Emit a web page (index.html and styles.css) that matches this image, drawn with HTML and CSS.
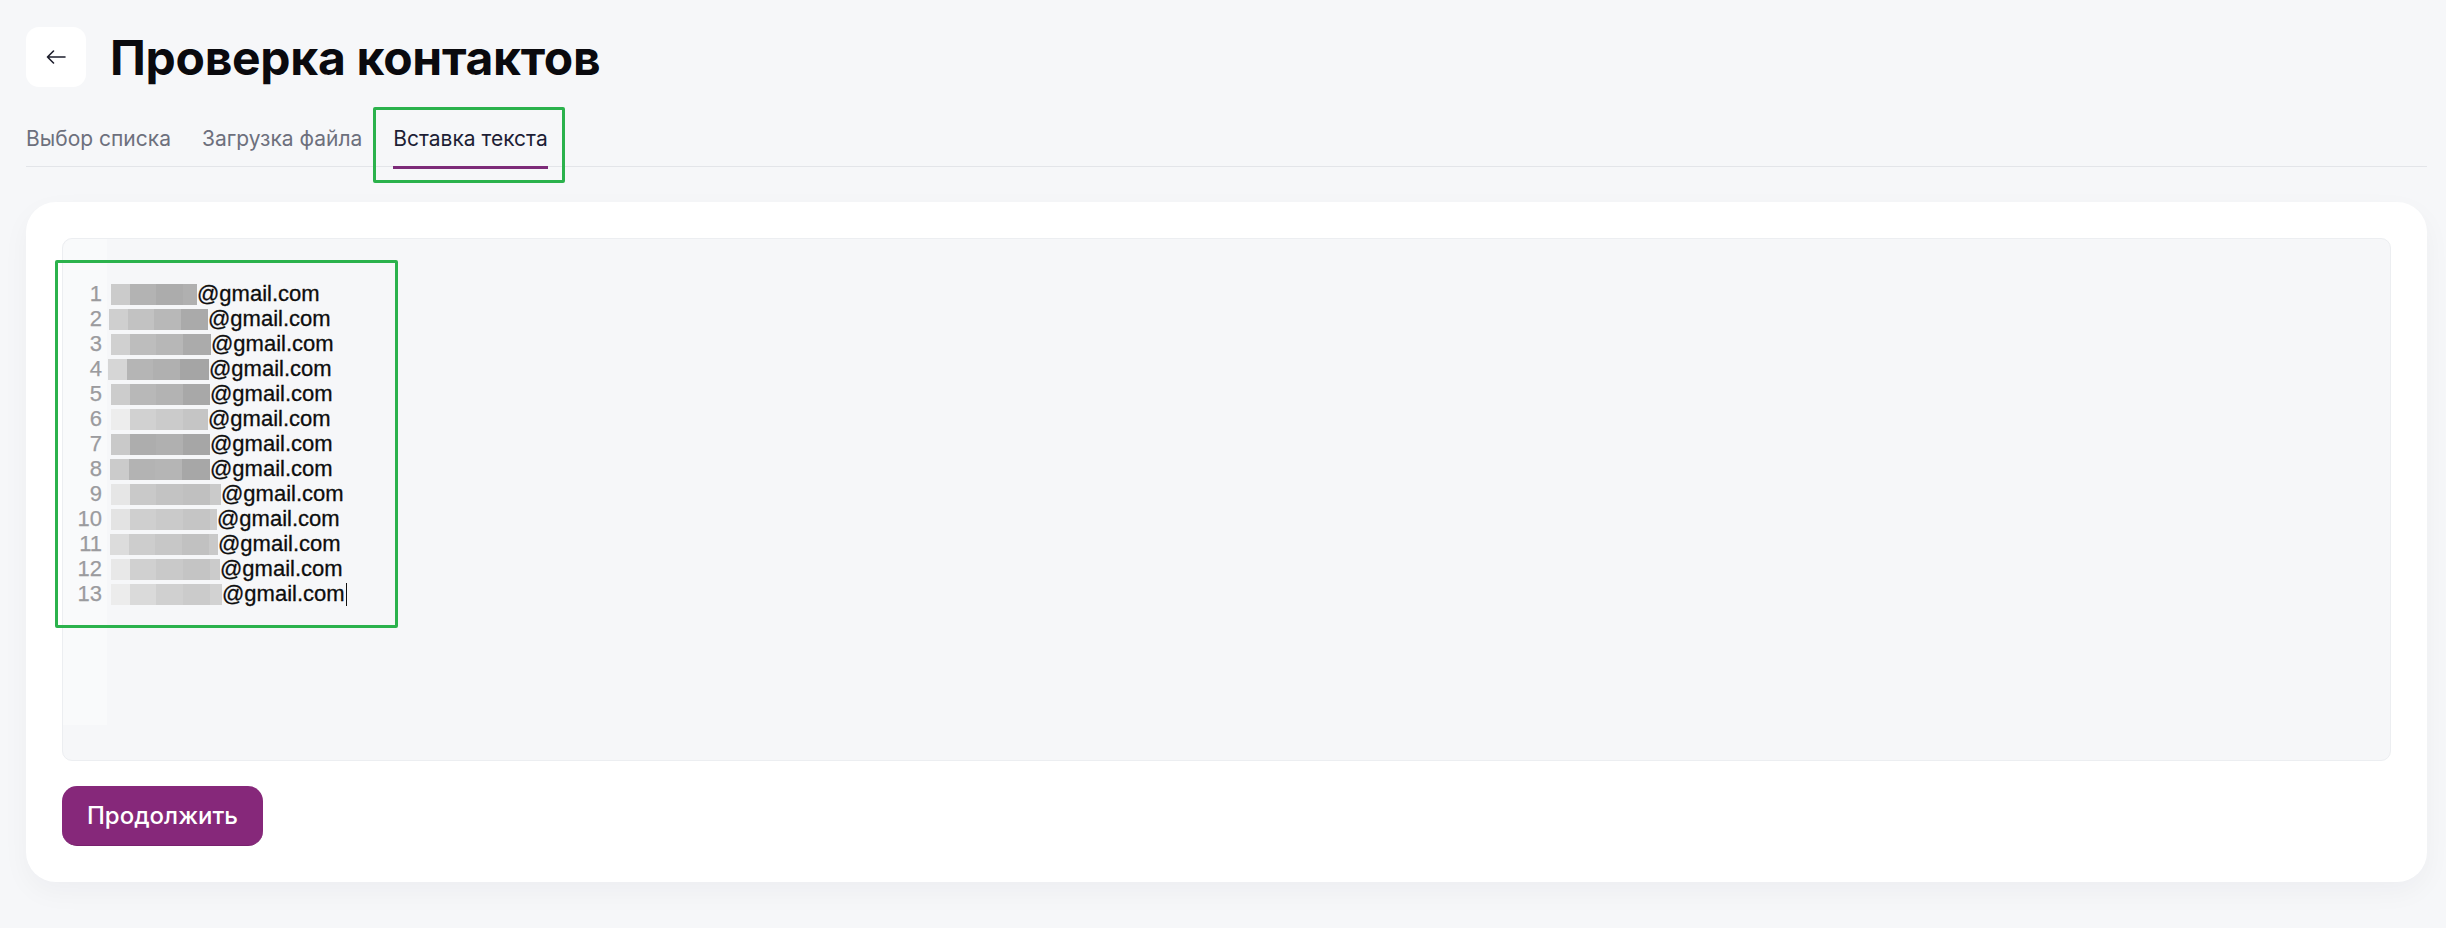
FILE: index.html
```html
<!DOCTYPE html>
<html lang="ru">
<head>
    <meta charset="UTF-8">
    <meta name="viewport" content="width=device-width, initial-scale=1.0">
    <title>Проверка контактов</title>
    <link rel="stylesheet" href="styles.css">
</head>
<body>
    <header class="page-head">
        <button class="back-btn" type="button" aria-label="Назад">
            <svg width="20" height="14" viewBox="0 0 20 14" fill="none">
                <path d="M19 7H1.5M7.5 1L1.5 7l6 6" stroke="#1d1e2c" stroke-width="1.6" stroke-linecap="round" stroke-linejoin="round"/>
            </svg>
        </button>
        <h1>Проверка контактов</h1>
    </header>

    <nav class="tabs">
        <a class="tab" href="#">Выбор списка</a>
        <a class="tab" href="#">Загрузка файла</a>
        <a class="tab active" href="#">Вставка текста<span class="mark mark-tab"></span></a>
    </nav>

    <main class="card">
        <div class="editor">
            <div class="gutter">
                <div>1</div><div>2</div><div>3</div><div>4</div><div>5</div>
                <div>6</div><div>7</div><div>8</div><div>9</div><div>10</div>
                <div>11</div><div>12</div><div>13</div>
            </div>
            <div class="lines">
                <div><span class="mask m1"></span>@gmail.com</div>
                <div><span class="mask m2"></span>@gmail.com</div>
                <div><span class="mask m3"></span>@gmail.com</div>
                <div><span class="mask m4"></span>@gmail.com</div>
                <div><span class="mask m5"></span>@gmail.com</div>
                <div><span class="mask m6"></span>@gmail.com</div>
                <div><span class="mask m7"></span>@gmail.com</div>
                <div><span class="mask m8"></span>@gmail.com</div>
                <div><span class="mask m9"></span>@gmail.com</div>
                <div><span class="mask m10"></span>@gmail.com</div>
                <div><span class="mask m11"></span>@gmail.com</div>
                <div><span class="mask m12"></span>@gmail.com</div>
                <div><span class="mask m13"></span>@gmail.com<span class="caret"></span></div>
            </div>
            <span class="mark mark-editor"></span>
        </div>

        <button class="primary-btn" type="button">Продолжить</button>
    </main>
</body>
</html>
```

FILE: styles.css
```css
body {
    font-family: 'Inter', 'Noto Sans', sans-serif;
    margin: 0;
    padding: 27px 19px 40px 26px;
    background: #f6f7f9;
    color: #111;
}

.page-head {
    display: flex;
    align-items: center;
    gap: 24px;
    height: 60px;
}

.back-btn {
    width: 60px;
    height: 60px;
    border: none;
    border-radius: 13px;
    background: #fff;
    display: flex;
    align-items: center;
    justify-content: center;
    padding: 0;
    cursor: pointer;
}

.page-head h1 {
    margin: 0;
    font-size: 48px;
    font-weight: 700;
    letter-spacing: -0.3px;
    color: #0a0a0e;
}

.tabs {
    display: flex;
    gap: 31px;
    margin-top: 38px;
    border-bottom: 1px solid #e3e5e9;
}

.tab {
    position: relative;
    font-size: 21px;
    line-height: 28px;
    padding-bottom: 13px;
    color: #6d707d;
    text-decoration: none;
}

.tab.active {
    color: #1d1e35;
}

.tab.active::after {
    content: '';
    position: absolute;
    left: 0;
    right: 0;
    bottom: -3px;
    height: 3px;
    background: #7d2b79;
}

/* green annotation frames */
.mark {
    position: absolute;
    border: 3px solid #2bb24c;
    border-radius: 2px;
    box-sizing: border-box;
    pointer-events: none;
}

.mark-tab {
    left: -20px;
    top: -18px;
    right: -17px;
    height: 76px;
}

.mark-editor {
    left: -8px;
    top: 21px;
    width: 343px;
    height: 368px;
}

.card {
    margin-top: 35px;
    background: #fff;
    border-radius: 30px;
    padding: 36px;
    box-shadow: 0 10px 28px rgba(20, 24, 40, 0.04);
}

.editor {
    position: relative;
    display: flex;
    align-items: flex-start;
    height: 523px;
    box-sizing: border-box;
    border: 1px solid #eceef1;
    border-radius: 10px;
    background: #f6f7f9;
    font-family: 'Liberation Sans', Arial, sans-serif;
    font-size: 22px;
    line-height: 25px;
}

.gutter {
    width: 39px;
    height: 444px;
    padding: 42px 5px 0 0;
    text-align: right;
    color: #9b9b9e;
    background: #f9fafb;
    border-radius: 10px 0 0 0;
    -webkit-text-stroke: 0.25px #9b9b9e;
}

.lines {
    padding: 42px 0 0 4px;
    color: #0d0d0d;
    -webkit-text-stroke: 0.3px #0d0d0d;
}

.mask {
    display: inline-block;
    height: 21px;
    vertical-align: -4px;
    background: linear-gradient(90deg,
        var(--c1) 0 19px,
        var(--c2) 19px 45px,
        var(--c3) 45px 72px,
        var(--c4) 72px 99px,
        var(--c5, var(--c4)) 99px);
}

.m1 { width: 86px; --c1: #cbcbcb; --c2: #b3b3b3; --c3: #acacac; --c4: #b0b0b0; }
.m2 { width: 99px; margin-left: -2px; --c1: #cfcfcf; --c2: #c2c2c2; --c3: #b8b8b8; --c4: #aaaaaa; }
.m3 { width: 100px; --c1: #d0d0d0; --c2: #bdbdbd; --c3: #b7b7b7; --c4: #ababab; }
.m4 { width: 101px; margin-left: -3px; --c1: #d6d6d6; --c2: #b5b5b5; --c3: #b0b0b0; --c4: #a5a5a5; }
.m5 { width: 99px; --c1: #cccccc; --c2: #b8b8b8; --c3: #b3b3b3; --c4: #a8a8a8; }
.m6 { width: 97px; --c1: #ededed; --c2: #d1d1d1; --c3: #cbcbcb; --c4: #c5c5c5; }
.m7 { width: 99px; --c1: #c9c9c9; --c2: #adadad; --c3: #b0b0b0; --c4: #a6a6a6; }
.m8 { width: 100px; margin-left: -1px; --c1: #cbcbcb; --c2: #b3b3b3; --c3: #b5b5b5; --c4: #a7a7a7; }
.m9 { width: 110px; --c1: #e6e6e6; --c2: #c9c9c9; --c3: #c3c3c3; --c4: #c0c0c0; --c5: #cacaca; }
.m10 { width: 106px; --c1: #e3e3e3; --c2: #cfcfcf; --c3: #cacaca; --c4: #c5c5c5; --c5: #cbcbcb; }
.m11 { width: 108px; margin-left: -1px; --c1: #dcdcdc; --c2: #cdcdcd; --c3: #c7c7c7; --c4: #c1c1c1; --c5: #c9c9c9; }
.m12 { width: 109px; --c1: #e8e8e8; --c2: #d0d0d0; --c3: #c9c9c9; --c4: #c4c4c4; --c5: #cbcbcb; }
.m13 { width: 111px; --c1: #ececec; --c2: #dadada; --c3: #d0d0d0; --c4: #cbcbcb; --c5: #d2d2d2; }

.caret {
    display: inline-block;
    width: 1px;
    height: 23px;
    margin-left: 1px;
    vertical-align: -5px;
    background: #111;
}

.primary-btn {
    margin-top: 25px;
    padding: 15px 25px;
    font-family: 'Inter', 'Noto Sans', sans-serif;
    font-size: 24px;
    line-height: 29px;
    font-weight: 500;
    color: #fff;
    background: #86287a;
    border: none;
    border-bottom: 1px solid #78216d;
    border-radius: 15px;
    cursor: pointer;
}
```
